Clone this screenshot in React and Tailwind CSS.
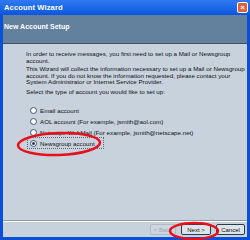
export default function App() {
  const font = { fontFamily: '"Liberation Sans", Arial, sans-serif' };
  const Radio = ({ checked, label, focus }) => (
    <div className="flex items-center h-[11px]">
      <div className={`flex items-center gap-[3px] pl-[2px] pr-[8px] h-[10px] ${focus ? "outline outline-1 outline-dotted outline-[#5a6b7c]" : ""}`}>
        <div className="w-[7px] h-[7px] rounded-full border border-[#3a5a80] bg-white flex items-center justify-center">
          {checked && <div className="w-[3px] h-[3px] rounded-full bg-[#2a3a4a]" />}
        </div>
        <span className="text-[6.2px] leading-[7px] text-[#111]">{label}</span>
      </div>
    </div>
  );
  return (
    <div className="w-[250px] h-[240px] relative overflow-hidden bg-[#0a4fd8] flex flex-col leading-none" style={font}>
      <div className="h-[15px] flex items-center justify-between pl-[4px] pr-[2px] bg-gradient-to-b from-[#2f7af0] to-[#0a55e0]">
        <span className="text-white font-bold text-[7.6px] leading-[8px] tracking-[0.1px]">Account Wizard</span>
        <div className="w-[11px] h-[11px] rounded-[2px] bg-[#e0603a] border border-white flex items-center justify-center text-white text-[8px] font-bold leading-none">×</div>
      </div>
      <div className="flex-1 mx-[3px] mb-[3px] flex flex-col bg-[#c7d2dd]">
        <div className="h-[29px] bg-[#63809d] pl-[1px] pt-[5px] border-b border-[#3d4f62] leading-[8px]">
          <span className="text-white font-bold text-[7px] leading-[8px]">New Account Setup</span>
        </div>
        <div className="flex-1 flex flex-col pl-[23px] pt-[7px] text-[6.2px] leading-[6.6px] text-[#111]">
          <p>In order to receive messages, you first need to set up a Mail or Newsgroup<br />account.</p>
          <p className="mt-[2px]">This Wizard will collect the information necessary to set up a Mail or Newsgroup<br />account. If you do not know the information requested, please contact your<br />System Administrator or Internet Service Provider.</p>
          <p className="mt-[3px]">Select the type of account you would like to set up:</p>
          <div className="mt-[9px] flex flex-col gap-[0px] pl-[2px]">
            <Radio label="Email account" />
            <Radio label="AOL account (For example, jsmith@aol.com)" />
            <Radio label="Netscape WebMail (For example, jsmith@netscape.net)" />
            <Radio label="Newsgroup account" checked focus />
          </div>
        </div>
        <div className="border-t border-[#8e9aa6] h-[1px]" />
        <div className="h-[16px] flex items-center justify-end gap-[5px] pr-[2px] border-t border-white">
          <div className="w-[26px] h-[11px] rounded-[2px] border border-[#b0bac4] bg-[#cdd6df] text-[#a0a8b0] text-[6px] flex items-center justify-center">&lt; Back</div>
          <div className="w-[30px] h-[11px] rounded-[2px] border border-[#2a3a50] bg-[#dde4ea] text-[#111] text-[6px] flex items-center justify-center">Next &gt;</div>
          <div className="w-[29px] h-[11px] rounded-[2px] border border-[#2a3a50] bg-[#dde4ea] text-[#111] text-[6px] flex items-center justify-center">Cancel</div>
        </div>
      </div>
      <svg className="absolute inset-0 pointer-events-none" width="250" height="240">
        <ellipse cx="59" cy="144" rx="41" ry="11" fill="none" stroke="#e8101a" strokeWidth="2.5" transform="rotate(-2 59 144)" />
        <ellipse cx="194" cy="231" rx="24" ry="8" fill="none" stroke="#e8101a" strokeWidth="2.5" />
      </svg>
    </div>
  );
}
